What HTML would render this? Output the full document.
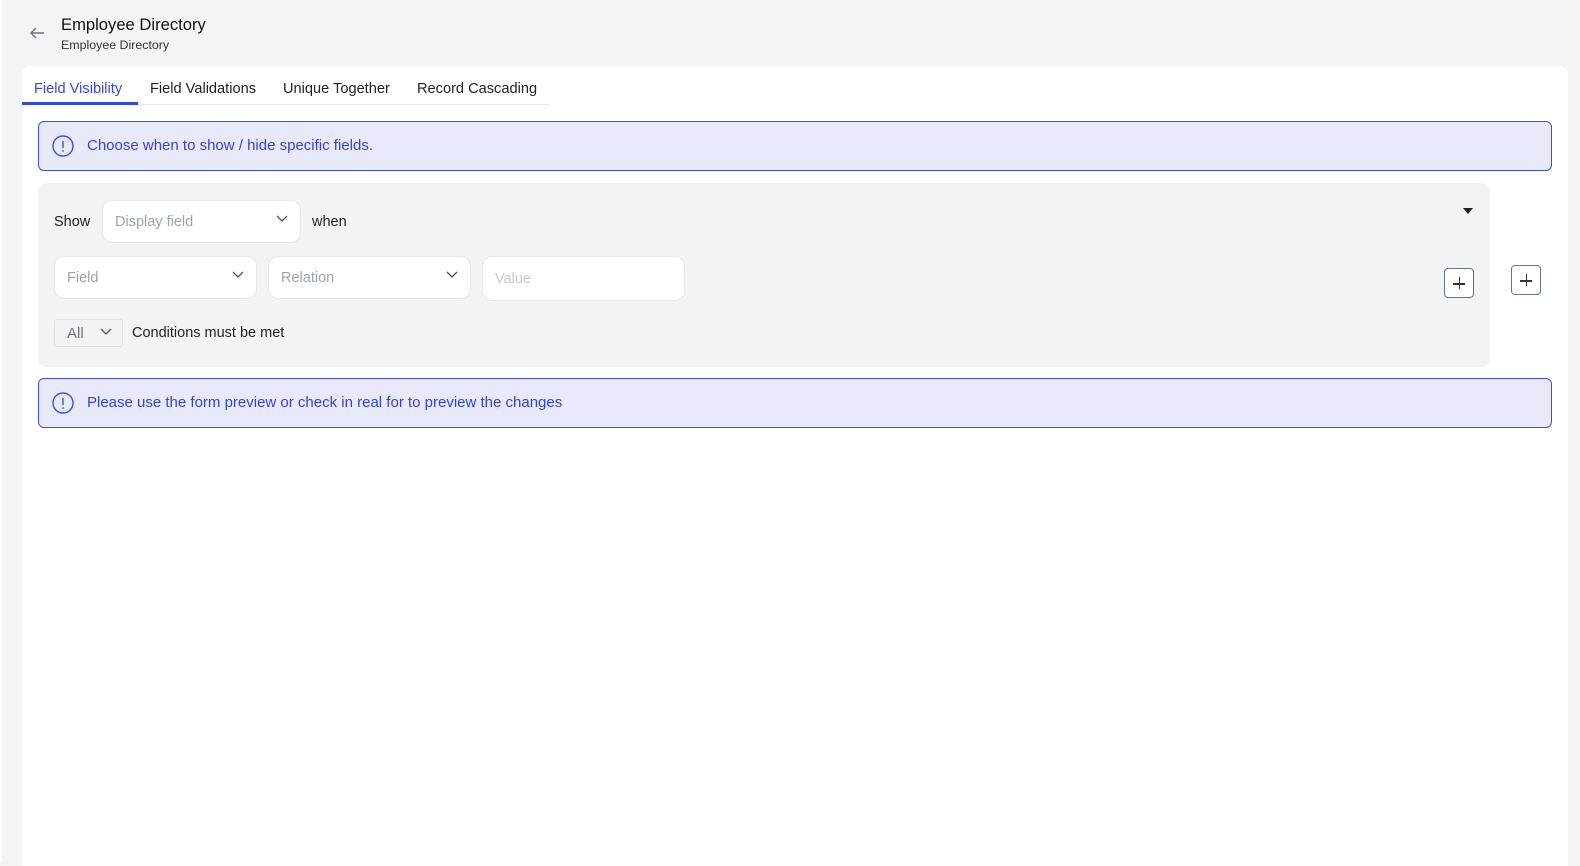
<!DOCTYPE html>
<html><head><meta charset="utf-8"><style>
*{box-sizing:border-box;margin:0;padding:0}
body{width:1580px;height:863px;overflow:hidden;background:#f3f4f6;font-family:"Liberation Sans",sans-serif;position:relative;color:#1f2937}
.strip{position:absolute;left:0;top:0;width:2px;height:863px;background:#fff}
.back{position:absolute;left:28px;top:25px}
.t1{position:absolute;left:61px;top:15px;font-size:16.6px;color:#111}
.t2{position:absolute;left:61px;top:38px;font-size:12.4px;color:#333}
.card{position:absolute;left:22px;top:66px;width:1546px;height:800px;background:#fff;border-radius:8px 8px 0 0}
.tabs{position:absolute;left:0;top:8px;width:527px;height:31px;border-bottom:1px solid #e5e7eb;font-size:14.6px}
.tab{position:absolute;top:7px;color:#222}
.tab.a{color:#3347e6}
.ul{position:absolute;left:0;top:28px;width:116px;height:3px;background:#3347e6}
.alert{position:absolute;left:16px;width:1514px;height:50px;background:#e8eafb;border:1px solid #3b4ee8;border-radius:6px;color:#3044d8;font-size:15px}
.alert svg{position:absolute;left:13px;top:13px}
.alert span{position:absolute;left:48px;top:15px}
.grey{position:absolute;left:16px;top:117px;width:1452px;height:184px;background:#f2f3f5;border-radius:8px}
.sel{position:absolute;background:#fff;border:1px solid #e5e7eb;border-radius:10px;font-size:14.5px;color:#9ca3af}
.sel span{position:absolute;left:12px;top:13px}
.sel svg{position:absolute;right:12px;top:14px}
.lbl{position:absolute;font-size:14.5px;color:#222}
.plus{position:absolute;width:30px;height:30px;border:1px solid #64748b;border-radius:4px;background:#fff}
.plus:before{content:"";position:absolute;left:8px;top:14px;width:12px;height:1.5px;background:#333}
.plus:after{content:"";position:absolute;left:13.5px;top:8px;width:1.5px;height:12px;background:#333}
</style></head><body>
<div class="strip"></div>
<svg class="back" width="18" height="16" viewBox="0 0 18 16"><path d="M16 8H3M8 3L3 8l5 5" fill="none" stroke="#6b7280" stroke-width="1.4"/></svg>
<div class="t1">Employee Directory</div>
<div class="t2">Employee Directory</div>
<div class="card">
 <div class="tabs">
  <span class="tab a" style="left:12px">Field Visibility</span>
  <span class="tab" style="left:128px">Field Validations</span>
  <span class="tab" style="left:261px">Unique Together</span>
  <span class="tab" style="left:395px">Record Cascading</span>
  <div class="ul"></div>
 </div>
 <div class="alert" style="top:55px"><svg width="22" height="22" viewBox="0 0 22 22"><circle cx="11" cy="11" r="10" fill="none" stroke="#3b4ee8" stroke-width="1.4"/><path d="M11 6v7" stroke="#3b4ee8" stroke-width="1.4"/><circle cx="11" cy="16" r="0.9" fill="#3b4ee8"/></svg><span>Choose when to show / hide specific fields.</span></div>
 <div class="grey">
  <div class="lbl" style="left:16px;top:31px">Show</div>
  <div class="sel" style="left:64px;top:17px;width:199px;height:43px"><span>Display field</span><svg width="12" height="8" viewBox="0 0 12 8"><path d="M1 1l5 5 5-5" fill="none" stroke="#4b5563" stroke-width="1.3"/></svg></div>
  <div class="lbl" style="left:274px;top:31px">when</div>
  <svg style="position:absolute;left:1425px;top:25px" width="10" height="6"><path d="M0 0h10L5 6z" fill="#222"/></svg>
  <div class="sel" style="left:16px;top:73px;width:203px;height:43px"><span>Field</span><svg width="12" height="8" viewBox="0 0 12 8"><path d="M1 1l5 5 5-5" fill="none" stroke="#4b5563" stroke-width="1.3"/></svg></div>
  <div class="sel" style="left:230px;top:73px;width:203px;height:43px"><span>Relation</span><svg width="12" height="8" viewBox="0 0 12 8"><path d="M1 1l5 5 5-5" fill="none" stroke="#4b5563" stroke-width="1.3"/></svg></div>
  <div class="sel" style="left:444px;top:73px;width:203px;height:45px"><span style="top:14px;color:#c4c7cc">Value</span></div>
  <div class="plus" style="left:1406px;top:85px"></div>
  <div class="sel" style="left:16px;top:136px;width:69px;height:28px;border-radius:3px;background:#f2f3f5;border-color:#dde0e6"><span style="top:5px;font-size:15px;color:#6b7280">All</span><svg style="top:8px;right:10px" width="12" height="8" viewBox="0 0 12 8"><path d="M1 1l5 5 5-5" fill="none" stroke="#4b5563" stroke-width="1.3"/></svg></div>
  <div class="lbl" style="left:94px;top:142px">Conditions must be met</div>
 </div>
 <div class="plus" style="left:1489px;top:199px"></div>
 <div class="alert" style="top:312px"><svg width="22" height="22" viewBox="0 0 22 22"><circle cx="11" cy="11" r="10" fill="none" stroke="#3b4ee8" stroke-width="1.4"/><path d="M11 6v7" stroke="#3b4ee8" stroke-width="1.4"/><circle cx="11" cy="16" r="0.9" fill="#3b4ee8"/></svg><span>Please use the form preview or check in real for to preview the changes</span></div>
</div>
</body></html>
